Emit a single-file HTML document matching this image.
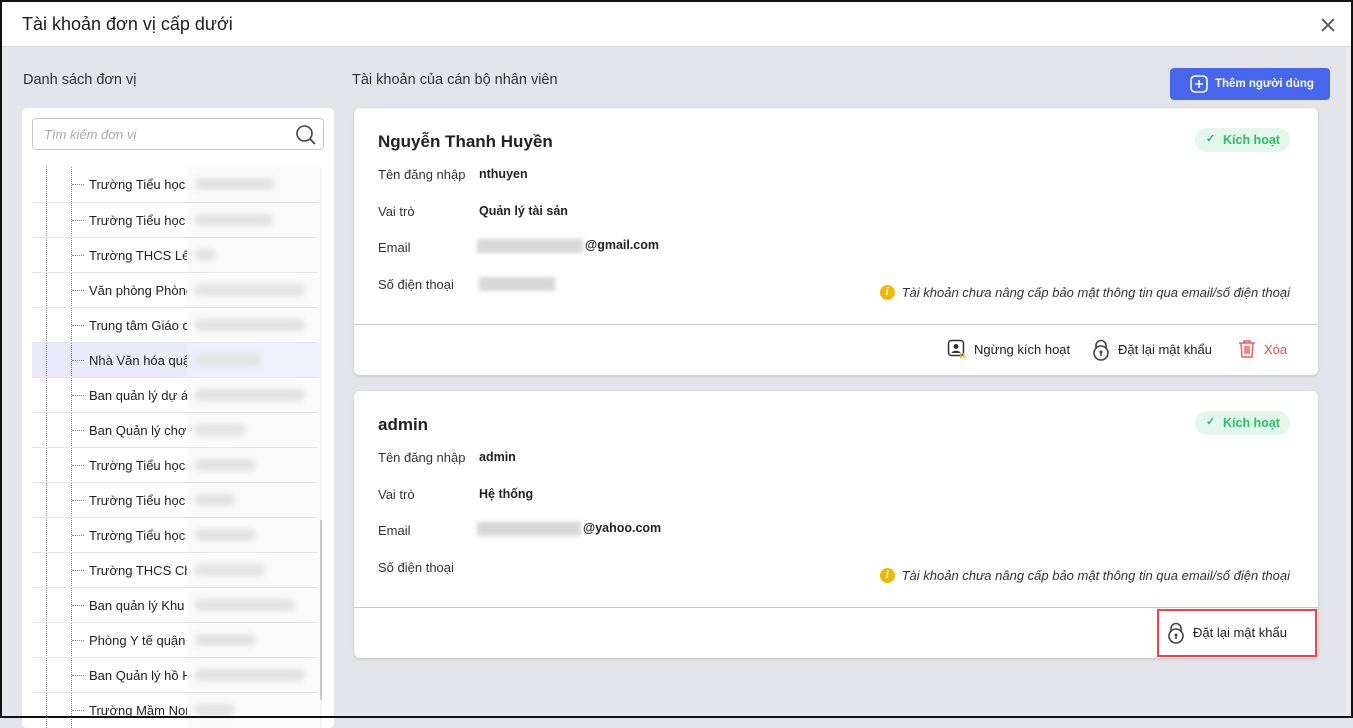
<!DOCTYPE html>
<html><head><meta charset="utf-8"><style>
*{box-sizing:border-box;margin:0;padding:0}
body{width:1353px;height:718px;overflow:hidden;font-family:"Liberation Sans",Arial,sans-serif;background:#e4e5ea;position:relative;color:#212121}
.frame{position:absolute;inset:0;border:2px solid #111;pointer-events:none;z-index:10}
.hdr{position:absolute;left:0;top:0;width:1353px;height:47px;background:#fff;border-bottom:1px solid #d6d7dc}
.hdr .t{position:absolute;left:22px;top:14px;font-size:18px;color:#1c1c1c}
.a{position:absolute}
.lbl{font-size:14px;color:#333}
.left{position:absolute;left:22px;top:108px;width:312px;height:620px;background:#fff;border-radius:5px}
.search{position:absolute;left:10px;top:10px;width:292px;height:32px;border:1px solid #c8c8c8;border-radius:4px}
.search span{position:absolute;left:11px;top:8px;font-size:13px;font-style:italic;color:#aaa}
.row{position:absolute;left:10px;width:285px;height:35px;border-top:1px solid #e6e6e6;font-size:13px;color:#222}
.row .d1{position:absolute;left:14px;top:0;height:35px;border-left:1px dotted #888}
.row .d2{position:absolute;left:39px;top:0;height:35px;border-left:1px dotted #888}
.row .h{position:absolute;left:40px;top:17px;width:12px;border-top:1px dotted #888}
.row .tx{position:absolute;left:57px;top:10px;white-space:nowrap}
.row .bl{position:absolute;left:155px;top:0;width:133px;height:35px;background:#fbfbfb}
.row .bl i{position:absolute;left:8px;top:11px;height:12px;background:#e2e2e2;filter:blur(3px);border-radius:5px}
.card{position:absolute;left:354px;width:964px;background:#fff;border-radius:6px;box-shadow:0 1px 3px rgba(0,0,0,.15)}
.name{position:absolute;left:24px;font-size:17px;font-weight:bold;color:#222}
.k{position:absolute;left:24px;font-size:13px;color:#333}
.v{position:absolute;left:125px;font-size:12.5px;font-weight:bold;color:#222}
.blur{display:inline-block;vertical-align:middle;height:14px;background:#d7d7d7;filter:blur(2px);margin-right:2px}
.badge{position:absolute;left:841px;width:95px;height:24px;background:#e3f7ec;border-radius:12px;color:#2cbd6b;font-size:12.5px;font-weight:bold;padding:5px 0 0 28px}
.badge b{position:absolute;left:11px;top:4px;font-size:11px}
.warn{position:absolute;right:28px;font-size:13px;font-style:italic;color:#333}
.warn i{position:absolute;left:-22px;top:0;width:15px;height:15px;border-radius:50%;background:#f0b800;color:#fff;font-size:11px;font-weight:bold;text-align:center;line-height:15px;font-style:italic}
.div{position:absolute;left:0;width:964px;border-top:1px solid #c9c9c9}
.act{position:absolute;font-size:13px;color:#222;white-space:nowrap}
.act svg{position:absolute;left:-27px;top:-3px}
</style></head><body>
<div class="hdr"><div class="t">Tài khoản đơn vị cấp dưới</div>
<svg class="a" style="left:1320px;top:17px" width="16" height="16" viewBox="0 0 16 16"><path d="M2 2L14 14M14 2L2 14" stroke="#555" stroke-width="1.8"/></svg></div>

<div class="a lbl" style="left:23px;top:72px;font-size:14.5px">Danh sách đơn vị</div>
<div class="left">
<div class="search"><span>Tìm kiếm đơn vị</span>
<svg class="a" style="left:262px;top:5px" width="22" height="22" viewBox="0 0 22 22"><circle cx="9.5" cy="9.5" r="7.5" fill="none" stroke="#444" stroke-width="1.6"/><path d="M15 15L20 20" stroke="#444" stroke-width="1.8"/></svg></div>
<div class="a" style="left:295px;top:60px;width:5px;height:560px;background:#f3f3f3"></div>
<div class="a" style="left:295px;top:412px;width:5px;height:180px;background:#c7c7c7;border-radius:2px"></div>
</div>

<div class="a lbl" style="left:352px;top:72px;font-size:14.5px">Tài khoản của cán bộ nhân viên</div>
<div class="a" style="left:1170px;top:68px;width:160px;height:32px;background:#4766ee;border-radius:4px;color:#fff;font-size:11.5px;font-weight:bold">
<svg class="a" style="left:20px;top:7px" width="18" height="18" viewBox="0 0 18 18"><rect x="1" y="1" width="16" height="16" rx="4" fill="none" stroke="#fff" stroke-width="1.6"/><path d="M9 5V13M5 9H13" stroke="#fff" stroke-width="1.6"/></svg>
<span class="a" style="left:45px;top:10px">Thêm người dùng</span></div>

<div class="card" style="top:108px;height:267px">
<div class="name" style="top:24px">Nguyễn Thanh Huyền</div>
<div class="badge" style="top:20px"><b>✓</b>Kích hoạt</div>
<div class="k" style="top:59px">Tên đăng nhập</div><div class="v" style="top:59px">nthuyen</div>
<div class="k" style="top:132px;top:132px">Email</div>
<div class="k" style="top:96px">Vai trò</div><div class="v" style="top:96px">Quản lý tài sản</div>
<div class="v" style="top:130px"><span class="blur" style="width:106px;margin-left:-2px"></span>@gmail.com</div>
<div class="k" style="top:169px">Số điện thoại</div><div class="v" style="top:168px"><span class="blur" style="width:76px"></span></div>
<div class="warn" style="top:177px"><i>i</i>Tài khoản chưa nâng cấp bảo mật thông tin qua email/số điện thoại</div>
<div class="div" style="top:216px"></div>
<div class="act" style="left:620px;top:234px"><svg width="20" height="20" viewBox="0 0 20 20"><rect x="1.5" y="1.5" width="15" height="15" rx="3" fill="none" stroke="#333" stroke-width="1.5"/><circle cx="9" cy="7.5" r="2.5" fill="#333"/><path d="M4.5 14C5 11 13 11 13.5 14Z" fill="#333"/><rect x="13" y="14" width="1.5" height="5" fill="#f0b400"/><rect x="16" y="14" width="1.5" height="5" fill="#f0b400"/></svg>Ngừng kích hoạt</div>
<div class="act" style="left:764px;top:234px"><svg width="20" height="22" viewBox="0 0 20 22"><path d="M5 10V6.5A5 5 0 0 1 15 6.5V10" fill="none" stroke="#444" stroke-width="1.6"/><circle cx="10" cy="14" r="7" fill="none" stroke="#444" stroke-width="1.6"/><circle cx="10" cy="13" r="1.5" fill="#444"/><path d="M10 13V17" stroke="#444" stroke-width="1.5"/></svg>Đặt lại mật khẩu</div>
<div class="act" style="left:910px;top:234px;color:#e84d4d"><svg width="20" height="20" viewBox="0 0 20 20"><path d="M2 4H18M7 4V2H13V4M4 4L5 18H15L16 4M8 7V15M10 7V15M12 7V15" fill="none" stroke="#ef5858" stroke-width="1.4"/></svg>Xóa</div>
</div>

<div class="card" style="top:391px;height:267px">
<div class="name" style="top:24px">admin</div>
<div class="badge" style="top:20px"><b>✓</b>Kích hoạt</div>
<div class="k" style="top:59px">Tên đăng nhập</div><div class="v" style="top:59px">admin</div>
<div class="k" style="top:96px">Vai trò</div><div class="v" style="top:96px">Hệ thống</div>
<div class="k" style="top:132px">Email</div><div class="v" style="top:130px"><span class="blur" style="width:104px;margin-left:-2px"></span>@yahoo.com</div>
<div class="k" style="top:169px">Số điện thoại</div>
<div class="warn" style="top:177px"><i>i</i>Tài khoản chưa nâng cấp bảo mật thông tin qua email/số điện thoại</div>
<div class="div" style="top:216px"></div>
<div class="act" style="left:839px;top:234px"><svg width="20" height="22" viewBox="0 0 20 22"><path d="M5 10V6.5A5 5 0 0 1 15 6.5V10" fill="none" stroke="#444" stroke-width="1.6"/><circle cx="10" cy="14" r="7" fill="none" stroke="#444" stroke-width="1.6"/><circle cx="10" cy="13" r="1.5" fill="#444"/><path d="M10 13V17" stroke="#444" stroke-width="1.5"/></svg>Đặt lại mật khẩu</div>
</div>
<div class="a" style="left:1157px;top:609px;width:160px;height:48px;border:2px solid #ee4444"></div>
<div class="a" style="left:1346px;top:47px;width:5px;height:671px;background:#ececef"></div>

<div style="position:absolute;left:22px;top:0">
<div class="row" style="top:167px;border-top:none;background:#fff"><div class="d1"></div><div class="d2"></div><div class="h"></div><div class="tx">Trường Tiểu học</div><div class="bl"><i style="width:80px"></i></div></div>
<div class="row" style="top:202px"><div class="d1"></div><div class="d2"></div><div class="h"></div><div class="tx">Trường Tiểu học T</div><div class="bl"><i style="width:78px"></i></div></div>
<div class="row" style="top:237px"><div class="d1"></div><div class="d2"></div><div class="h"></div><div class="tx">Trường THCS Lê</div><div class="bl"><i style="width:20px"></i></div></div>
<div class="row" style="top:272px"><div class="d1"></div><div class="d2"></div><div class="h"></div><div class="tx">Văn phòng Phòng</div><div class="bl"><i style="width:110px"></i></div></div>
<div class="row" style="top:307px"><div class="d1"></div><div class="d2"></div><div class="h"></div><div class="tx">Trung tâm Giáo d</div><div class="bl"><i style="width:110px"></i></div></div>
<div class="row" style="top:342px;background:#e9ebfb"><div class="d1"></div><div class="d2"></div><div class="h"></div><div class="tx">Nhà Văn hóa quậ</div><div class="bl" style="background:#eef0fb"><i style="width:65px"></i></div></div>
<div class="row" style="top:377px"><div class="d1"></div><div class="d2"></div><div class="h"></div><div class="tx">Ban quản lý dự án</div><div class="bl"><i style="width:110px"></i></div></div>
<div class="row" style="top:412px"><div class="d1"></div><div class="d2"></div><div class="h"></div><div class="tx">Ban Quản lý chợ</div><div class="bl"><i style="width:50px"></i></div></div>
<div class="row" style="top:447px"><div class="d1"></div><div class="d2"></div><div class="h"></div><div class="tx">Trường Tiểu học</div><div class="bl"><i style="width:60px"></i></div></div>
<div class="row" style="top:482px"><div class="d1"></div><div class="d2"></div><div class="h"></div><div class="tx">Trường Tiểu học</div><div class="bl"><i style="width:40px"></i></div></div>
<div class="row" style="top:517px"><div class="d1"></div><div class="d2"></div><div class="h"></div><div class="tx">Trường Tiểu học T</div><div class="bl"><i style="width:60px"></i></div></div>
<div class="row" style="top:552px"><div class="d1"></div><div class="d2"></div><div class="h"></div><div class="tx">Trường THCS Chu</div><div class="bl"><i style="width:70px"></i></div></div>
<div class="row" style="top:587px"><div class="d1"></div><div class="d2"></div><div class="h"></div><div class="tx">Ban quản lý Khu v</div><div class="bl"><i style="width:100px"></i></div></div>
<div class="row" style="top:622px"><div class="d1"></div><div class="d2"></div><div class="h"></div><div class="tx">Phòng Y tế quận</div><div class="bl"><i style="width:60px"></i></div></div>
<div class="row" style="top:657px"><div class="d1"></div><div class="d2"></div><div class="h"></div><div class="tx">Ban Quản lý hồ H</div><div class="bl"><i style="width:110px"></i></div></div>
<div class="row" style="top:692px"><div class="d1"></div><div class="d2"></div><div class="h"></div><div class="tx">Trường Mầm Non</div><div class="bl"><i style="width:40px"></i></div></div>
</div>
<div class="frame"></div>
</body></html>
